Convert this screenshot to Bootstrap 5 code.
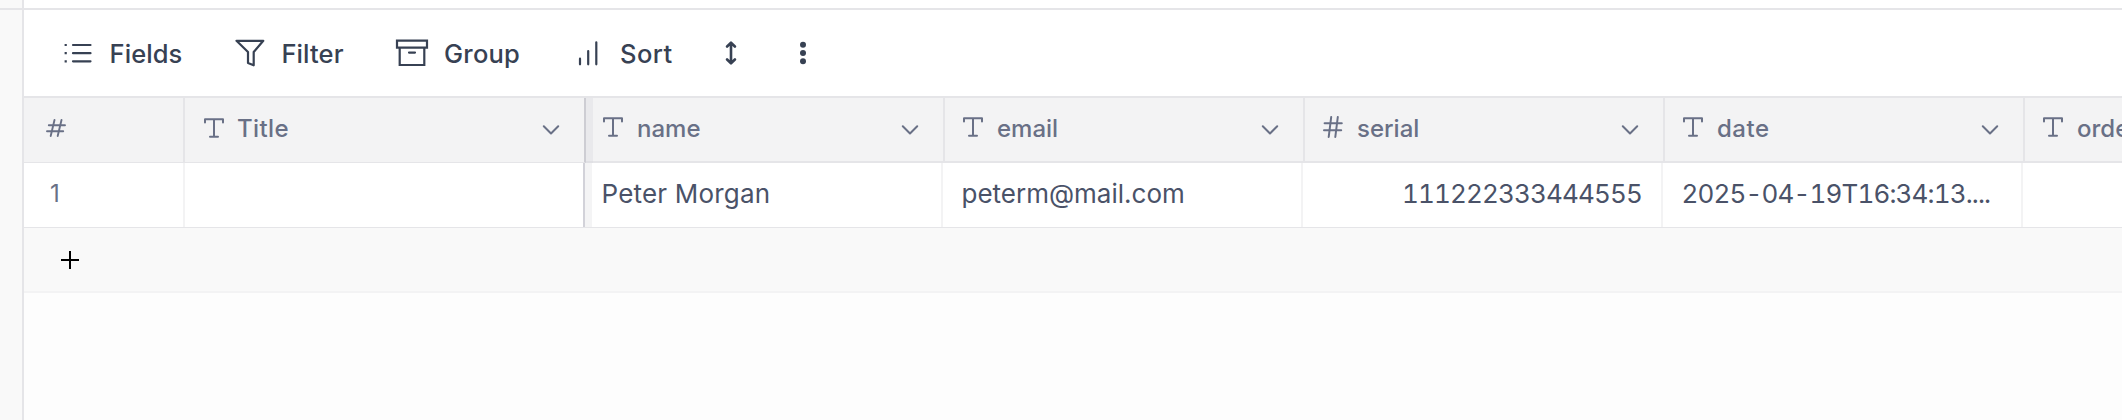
<!DOCTYPE html>
<html lang="en">
<head>
<meta charset="utf-8">
<title>Table</title>
<link href="https://cdn.jsdelivr.net/npm/bootstrap@5.3.0/dist/css/bootstrap.min.css" rel="stylesheet">
<style>
body{font-family:Inter,"Noto Sans",sans-serif;font-weight:500;background:#fdfdfd;overflow:hidden}
svg{display:block;flex:none;fill:none;stroke:currentColor;stroke-width:2;stroke-linecap:round;stroke-linejoin:round}
.app{height:420px}
.rail{width:24px;background:#f9f9f9;border-right:2px solid #e5e5e8}
.rail-line{height:2px;margin-top:8px;background:#e5e5e8}
.topstrip{height:10px;border-bottom:2px solid #e5e5e8;background:#fff}
.tools{height:88px;border-bottom:2px solid #e5e5e8;background:#fff;color:#374153;padding-left:38px}
.tool{background:none;border:0;padding:0;color:inherit;font-size:25.5px;font-weight:460;line-height:38px}
.tool svg{stroke-width:2.2}
.tool span{padding-top:1px}
.grid-row{width:2361px}
.head{height:65px;background:#f3f3f4;color:#697086;font-size:24px;font-weight:450}
.cell{width:360px;flex:none;padding:0 24px 0 18px;white-space:nowrap}
.head .cell{border-right:2px solid #e5e5e8;border-bottom:2px solid #e5e5e8}
.head .cell.thin{border-bottom-width:1px}
.head .label{margin:0 auto 0 14px;padding-bottom:2px}
.kind{margin-bottom:5px}
.head .cell.num{width:161px;padding-left:22px;padding-bottom:4px}
.head .cell.title{width:401px;padding-left:19px;border-right-color:#cdcdd3}
.shade{width:7px;background:#e9e9ec;border-bottom:2px solid #e0e0e4}
.head .cell.first{width:352px;padding-left:10px}
.body-row{height:65px;background:#fff;color:#4a5268;font-size:26px;font-weight:400;border-bottom:1px solid #e5e5e8}
.body-row .cell{border-right:2px solid #f3f3f4;padding:0 19px 3px 18.5px}
.body-row .cell.num{width:161px;color:#697086;font-size:24px;padding-left:26px}
.body-row .cell.title{width:400px;border-right-color:#d2d2d9}
.body-row .shade{width:7px;background:#f4f4f5;border:0}
.body-row .cell.first{width:351px;padding-left:9.5px}
.digits{font-feature-settings:"tnum";letter-spacing:-.86px}
.add{height:65px;background:#f9f9f9;border-bottom:2px solid #f3f3f4;color:#000;padding-left:37px}
</style>
<script src="https://cdn.jsdelivr.net/npm/bootstrap@5.3.0/dist/js/bootstrap.bundle.min.js"></script>
</head>
<body>
<svg width="0" height="0" class="position-absolute">
<defs>
<symbol id="text" viewBox="0 0 20 20"><path d="M1 4.5V1.2H19V4.5M10 1.2V18.7M6 18.7H14"/></symbol>
<symbol id="chev" viewBox="0 0 18 10"><path d="M1.8 1.3L9 8.5L16.2 1.3"/></symbol>
<symbol id="hash" viewBox="0 0 20 22"><path d="M1.6 7.3H18.8M1 14.2H18.2M8.2 1L5.7 21M14.8 1L12.3 21"/></symbol>
</defs>
</svg>
<div class="app d-flex">
  <aside class="rail flex-shrink-0"><div class="rail-line"></div></aside>
  <main class="flex-grow-1 overflow-hidden">
    <div class="topstrip"></div>
    <div class="tools d-flex align-items-center">
      <button class="tool d-flex align-items-center"><svg width="30" height="20" viewBox="0 0 30 20"><path d="M11 2H28.5M11 10.2H28.5M11 18.3H28.5"/><path stroke-linecap="butt" d="M2.6 2H4.8M2.6 10.2H4.8M2.6 18.3H4.8"/></svg><span style="margin-left:17.5px;letter-spacing:.1px">Fields</span></button>
      <button class="tool d-flex align-items-center" style="margin-left:53px"><svg width="30" height="28" viewBox="0 0 30 28"><path d="M1.5 1.8H28.3L18.7 13V26.3L13 23.9V13Z"/></svg><span style="margin-left:16px;letter-spacing:.1px">Filter</span></button>
      <button class="tool d-flex align-items-center" style="margin-left:51.5px"><svg width="34" height="28" viewBox="0 0 34 28"><path stroke-linejoin="miter" d="M2 1.6H32V8.7H2ZM4.7 8.7V26H29.3V8.7M14 13.6H20"/></svg><span style="margin-left:15px;letter-spacing:.2px">Group</span></button>
      <button class="tool d-flex align-items-center" style="margin-left:58px"><svg width="22" height="26" viewBox="0 0 22 26"><path d="M2 18.7V24.3M10.2 11V24.3M18.3 2.3V24.3"/></svg><span style="margin-left:20px;letter-spacing:.4px">Sort</span></button>
      <button class="tool" style="margin-left:52.5px"><svg width="12" height="24" viewBox="0 0 12 24"><path stroke-width="2.6" d="M6 2V22M2.1 5.5L6 1.7L9.9 5.5M2.1 18.5L6 22.3L9.9 18.5"/></svg></button>
      <button class="tool" style="margin-left:62px"><svg width="8" height="24" viewBox="0 0 8 24"><g fill="currentColor" stroke="none"><circle cx="4" cy="3.7" r="3"/><circle cx="4" cy="12" r="3"/><circle cx="4" cy="20.2" r="3"/></g></svg></button>
    </div>
    <div class="grid-row head d-flex">
      <div class="cell num thin d-flex align-items-center"><svg width="20" height="18" viewBox="0 0 20 18"><path d="M2.8 6.2H19M1 12.2H17.2M8.5 1L4.7 17M15.5 1L11.7 17" stroke-width="1.9"/></svg></div>
      <div class="cell title thin d-flex align-items-center"><svg width="20" height="20" class="kind"><use href="#text"/></svg><span class="label" style="letter-spacing:.4px;margin-left:13px">Title</span><svg width="18" height="10"><use href="#chev"/></svg></div>
      <div class="shade"></div>
      <div class="cell first d-flex align-items-center"><svg width="20" height="20" class="kind"><use href="#text"/></svg><span class="label">name</span><svg width="18" height="10"><use href="#chev"/></svg></div>
      <div class="cell d-flex align-items-center"><svg width="20" height="20" class="kind"><use href="#text"/></svg><span class="label">email</span><svg width="18" height="10"><use href="#chev"/></svg></div>
      <div class="cell d-flex align-items-center"><svg width="20" height="22" class="kind"><use href="#hash"/></svg><span class="label">serial</span><svg width="18" height="10"><use href="#chev"/></svg></div>
      <div class="cell d-flex align-items-center"><svg width="20" height="20" class="kind"><use href="#text"/></svg><span class="label" style="letter-spacing:.5px">date</span><svg width="18" height="10"><use href="#chev"/></svg></div>
      <div class="cell d-flex align-items-center"><svg width="20" height="20" class="kind"><use href="#text"/></svg><span class="label">order</span><svg width="18" height="10"><use href="#chev"/></svg></div>
    </div>
    <div class="grid-row body-row d-flex">
      <div class="cell num d-flex align-items-center">1</div>
      <div class="cell title"></div>
      <div class="shade"></div>
      <div class="cell first d-flex align-items-center" style="letter-spacing:.2px">Peter Morgan</div>
      <div class="cell d-flex align-items-center">peterm@mail.com</div>
      <div class="cell digits d-flex align-items-center justify-content-end">111222333444555</div>
      <div class="cell digits d-flex align-items-center">2025-04-19T16:34:13....</div>
      <div class="cell"></div>
    </div>
    <div class="add d-flex align-items-center"><svg width="18" height="18" viewBox="0 0 18 18"><path stroke-linecap="butt" d="M0 9H18M9 0V18"/></svg></div>
  </main>
</div>
</body>
</html>
